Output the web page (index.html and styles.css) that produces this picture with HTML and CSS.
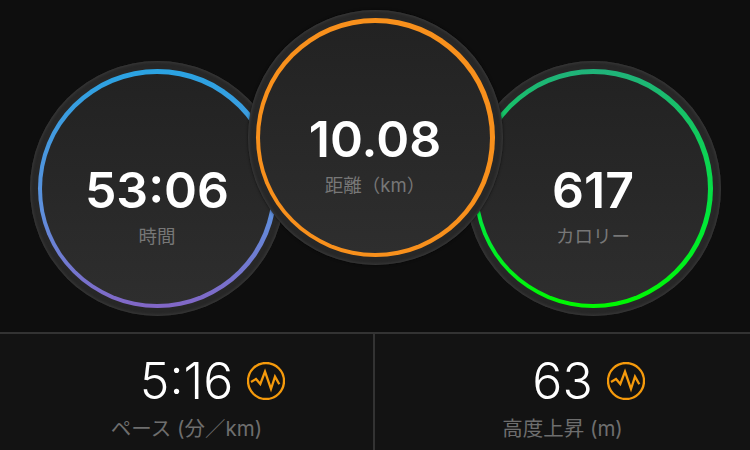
FILE: index.html
```html
<!DOCTYPE html>
<html lang="ja">
  <head>
    <meta charset="UTF-8" />
    <title>アクティビティ</title>
    <link rel="stylesheet" href="styles.css">
  </head>
  <body>
    <section class="gauges">
      <div class="gauge gauge-side">
        <div class="ring ring-time">
          <div class="face">
            <div class="gauge-value">53:06</div>
            <div class="gauge-label">時間</div>
          </div>
        </div>
      </div>
      <div class="gauge gauge-main">
        <div class="ring ring-distance">
          <div class="face">
            <div class="gauge-value">10.08</div>
            <div class="gauge-label">距離（km）</div>
          </div>
        </div>
      </div>
      <div class="gauge gauge-side">
        <div class="ring ring-calories">
          <div class="face">
            <div class="gauge-value">617</div>
            <div class="gauge-label">カロリー</div>
          </div>
        </div>
      </div>
    </section>
    <section class="stats">
      <div class="stat">
        <div class="stat-row">
          <div class="stat-value">5:16</div>
          <svg class="pulse" viewBox="0 0 38 38" aria-hidden="true">
            <circle cx="19" cy="19" r="18" />
            <path d="M4 20 L9 17 L13.3 22 L18 9.7 L24 27 L28 14.7 L32.3 22.3" />
          </svg>
        </div>
        <div class="stat-label">ペース (分／km)</div>
      </div>
      <div class="stat">
        <div class="stat-row">
          <div class="stat-value">63</div>
          <svg class="pulse" viewBox="0 0 38 38" aria-hidden="true">
            <circle cx="19" cy="19" r="18" />
            <path d="M4 20 L9 17 L13.3 22 L18 9.7 L24 27 L28 14.7 L32.3 22.3" />
          </svg>
        </div>
        <div class="stat-label">高度上昇 (m)</div>
      </div>
    </section>
  </body>
</html>
```
FILE: styles.css
```css
* {
  box-sizing: border-box;
}
html,
body {
  height: 100%;
}
body {
  margin: 0;
  width: 750px;
  height: 450px;
  overflow: hidden;
  background: #0e0e0e;
  font-family: 'Inter', 'Noto Sans CJK JP', sans-serif;
  color: #fff;
}
.gauges {
  display: flex;
  justify-content: center;
  align-items: flex-start;
  height: 332px;
  padding: 10px 0 0 0;
}
.gauge {
  width: 255px;
  height: 255px;
  flex: none;
  border-radius: 50%;
  padding: 8px;
  background: #272727;
  box-shadow: inset 0 0 3px 1px #3a3a3a;
}
.gauge-side {
  margin-top: 51px;
}
.gauge-main {
  position: relative;
  z-index: 1;
  margin: 0 -37px;
  box-shadow: inset 0 0 3px 1px #3a3a3a, 0 0 3px rgba(0, 0, 0, 0.6);
}
.ring {
  height: 100%;
  border-radius: 50%;
  padding: 4.5px;
}
.ring-time {
  background: linear-gradient(#2aa3e2, #5f8fdc 60%, #8266c6);
}
.ring-distance {
  background: #f8901c;
}
.ring-calories {
  background: linear-gradient(#20b27a, #00e83a 62%, #00f800);
}
.face {
  height: 100%;
  border-radius: 50%;
  background: linear-gradient(#222222, #2e2e2e);
  display: flex;
  flex-direction: column;
  align-items: center;
  justify-content: center;
  padding-top: 32px;
}
.gauge-value {
  font-size: 50px;
  font-weight: 600;
  line-height: 58px;
}
.gauge-label {
  font-size: 18.5px;
  line-height: 24px;
  margin-top: 5px;
  color: #777;
}
.stats {
  display: grid;
  grid-template-columns: 373px 1fr;
  height: 118px;
  background: #131313;
  border-top: 2px solid #333;
}
.stat {
  padding-top: 18px;
  text-align: center;
}
.stat + .stat {
  border-left: 2px solid #333;
}
.stat-row {
  display: grid;
  grid-template-columns: 1fr auto 1fr;
  align-items: center;
  column-gap: 14px;
}
.stat-value {
  grid-column: 2;
  font-size: 50px;
  font-weight: 300;
  line-height: 58px;
}
.pulse {
  grid-column: 3;
  width: 38px;
  height: 38px;
  fill: none;
  stroke: #f59a0c;
  stroke-width: 2.3;
}
.stat-label {
  font-size: 20.5px;
  line-height: 24px;
  margin-top: 7px;
  color: #6e6e6e;
}
```
